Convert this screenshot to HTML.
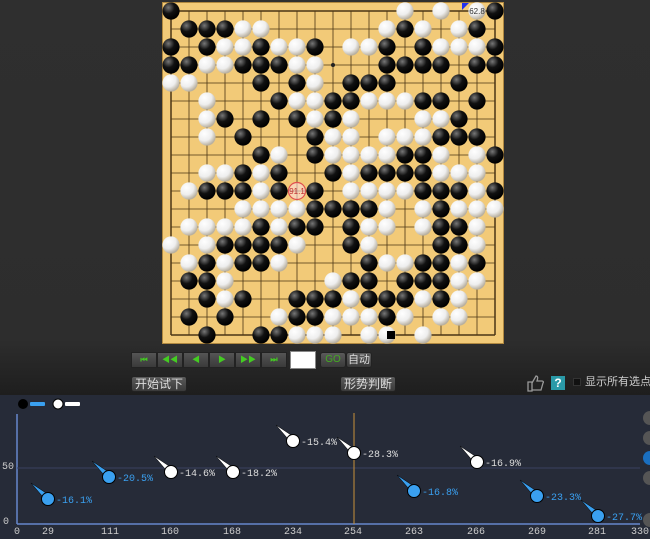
<!DOCTYPE html>
<html><head><meta charset="utf-8">
<style>
*{margin:0;padding:0;box-sizing:border-box}
body{width:650px;height:539px;overflow:hidden;background:#2c2c2c;font-family:"Liberation Sans","Noto Sans CJK SC",sans-serif;position:relative}
.top{position:absolute;left:0;top:0;width:650px;height:395px;background:linear-gradient(#2f2f2f 0,#2d2d2d 340px,#1e1e1e 395px)}
#board{position:absolute;left:162px;top:2px}
.btn{position:absolute;height:16px;background:linear-gradient(#5a5a5a,#3a3a3a);border:1px solid #222;border-radius:3px;color:#ddd;font-size:12px;line-height:14px;text-align:center;white-space:nowrap}
.nav{position:absolute;top:352px;height:16px;width:26px;background:linear-gradient(#555,#3a3a3a);border:1px solid #222;color:#4c2;font-size:8px;line-height:14px;text-align:center;font-weight:bold}
.chart{position:absolute;left:0;top:395px;width:650px;height:144px;background:#262b38}
.lbl{position:absolute;font-family:"Liberation Mono",monospace;font-size:10px;color:#ccc}
</style></head><body>
<div class="top"></div>
<svg id="board" width="342" height="342" viewBox="0 0 342 342"></svg>

<div class="nav" style="left:131px">⏮</div>
<div class="nav" style="left:157px">◀◀</div>
<div class="nav" style="left:183px">◀</div>
<div class="nav" style="left:209px">▶</div>
<div class="nav" style="left:235px">▶▶</div>
<div class="nav" style="left:261px">⏭</div>
<div style="position:absolute;left:290px;top:351px;width:26px;height:18px;background:#fff;border:1px solid #888"></div>
<div class="btn" style="left:320px;top:352px;width:26px;color:#4a2;font-size:10px">GO</div>
<div class="btn" style="left:346px;top:352px;width:26px;font-size:11px">自动</div>
<div class="btn" style="left:131px;top:376px;width:56px">开始试下</div>
<div class="btn" style="left:340px;top:376px;width:56px">形势判断</div>
<svg style="position:absolute;left:526px;top:374px" width="18" height="18"><path d="M2 8h4v9H2z M6 9l4-7c2 0 2 2 1 5h5c1 0 2 1 1 2l-2 7H6z" fill="none" stroke="#999" stroke-width="1.3"/></svg>
<div style="position:absolute;left:551px;top:376px;width:14px;height:14px;background:#2a9aa8;color:#fff;font-size:12px;font-weight:bold;line-height:14px;text-align:center">?</div>
<div style="position:absolute;left:573px;top:378px;width:8px;height:8px;background:#111;border:1px solid #333"></div>
<div style="position:absolute;left:585px;top:376px;font-size:11px;color:#ccc;line-height:13px;white-space:nowrap">显示所有选点</div>

<div class="chart"></div>
<svg style="position:absolute;left:0;top:395px" width="650" height="144" viewBox="0 395 650 144">
<circle cx="23" cy="404" r="5" fill="#000"/><rect x="30" y="402" width="15" height="4" rx="1" fill="#3aa0f0"/>
<circle cx="58" cy="404" r="5" fill="#fff" stroke="#000"/><rect x="65" y="402" width="15" height="4" rx="1" fill="#fff"/>
<line x1="17" y1="414" x2="17" y2="524" stroke="#6688cc" stroke-width="1.5"/>
<line x1="17" y1="524" x2="640" y2="524" stroke="#6688cc" stroke-width="1.5"/>
<line x1="17" y1="468" x2="640" y2="468" stroke="#3a4260"/>
<line x1="354" y1="413" x2="354" y2="524" stroke="#c8903a"/>
<g id="marks"></g>
<circle cx="650" cy="418" r="7" fill="#555"/><circle cx="650" cy="438" r="7" fill="#555"/><circle cx="650" cy="458" r="7" fill="#1a6fc0"/><circle cx="650" cy="478" r="7" fill="#555"/><circle cx="650" cy="520" r="7" fill="#555"/>
</svg>
<div class="lbl" style="left:2px;top:462px">50</div>
<div class="lbl" style="left:3px;top:517px">0</div>
<div id="xl"></div>

<script>
var rows=[
"B............W.W.WB",
".BBBWW......WBW.WB.",
"B.BWWBWWB.WWB.BWWWB",
"BBWWBBBWW...BBBB.BB",
"WW...B.BW.BBB...B..",
"..W...BWWBBWWWBB.B.",
"..WB.B.BWBW...WWB..",
"..W.B...BWW.WWWBBB.",
".....BW.BWWWWBBW.WB",
"..WWBWB..BWBBBBWWW.",
".WBBBWB.B.WWWWBBBWB",
"....WWWWBBBBW.WBWWW",
".WWWWBWBB.BWW.WBBW.",
"W.WBBBBW..BW...BBW.",
".WBWBBW....BWWBBWB.",
".BBW.....WBB.BBBWW.",
"..BWB..BBBWBBBWBW..",
".B.B..WBBWWWBW.WW..",
"..B..BBWWW.WW.W...."];
var s='<defs><radialGradient id="gb" cx="35%" cy="30%" r="70%"><stop offset="0" stop-color="#777"/><stop offset="0.5" stop-color="#111"/><stop offset="1" stop-color="#000"/></radialGradient><radialGradient id="gw" cx="35%" cy="30%" r="70%"><stop offset="0" stop-color="#fff"/><stop offset="0.6" stop-color="#eee"/><stop offset="1" stop-color="#b8b0a0"/></radialGradient></defs>';
s+='<rect width="342" height="342" fill="#f2ca78"/><rect x="0.5" y="0.5" width="341" height="341" fill="none" stroke="#b08840"/>';
for(var i=0;i<19;i++){var p=9+18*i;s+='<line x1="9" y1="'+p+'" x2="333" y2="'+p+'" stroke="#4a3515" stroke-width="'+(i==0||i==18?1.5:0.8)+'"/><line x1="'+p+'" y1="9" x2="'+p+'" y2="333" stroke="#4a3515" stroke-width="'+(i==0||i==18?1.5:0.8)+'"/>';}
[3,9,15].forEach(function(a){[3,9,15].forEach(function(b){s+='<circle cx="'+(9+18*a)+'" cy="'+(9+18*b)+'" r="2" fill="#222"/>';});});
for(var r=0;r<19;r++)for(var c=0;c<19;c++){var ch=rows[r][c];if(ch=='.')continue;s+='<circle cx="'+(9+18*c)+'" cy="'+(9+18*r)+'" r="8.6" fill="url(#g'+(ch=='B'?'b':'w')+')"/>';}
s+='<circle cx="135" cy="189" r="8.5" fill="rgba(255,220,220,0.6)" stroke="#e05050" stroke-width="1.2"/><text x="135" y="192" font-size="8" fill="#c03030" text-anchor="middle" font-family="Liberation Sans">91.1</text>';
s+='<text x="315" y="12" font-size="8" fill="#333" text-anchor="middle" font-family="Liberation Sans">62.8</text><path d="M300 1h7l-7 7z" fill="#2030f0"/>';
s+='<rect x="225" y="329" width="8" height="8" fill="#000"/>';
document.getElementById('board').innerHTML=s;
var m=[[48,499,'b','-16.1%'],[109,477,'b','-20.5%'],[171,472,'w','-14.6%'],[233,472,'w','-18.2%'],[293,441,'w','-15.4%'],[354,453,'w','-28.3%'],[414,491,'b','-16.8%'],[477,462,'w','-16.9%'],[537,496,'b','-23.3%'],[598,516,'b','-27.7%']];
var g='';m.forEach(function(k){var col=k[2]=='b'?'#3aa0f0':'#fff';var x=k[0],y=k[1];
g+='<path d="M'+(x-17)+' '+(y-16)+'L'+(x-2)+' '+(y-6)+'L'+(x-5)+' '+(y-2)+'Z" fill="'+col+'" stroke="#000" stroke-width="0.5"/><circle cx="'+x+'" cy="'+y+'" r="6.5" fill="'+col+'" stroke="#000" stroke-width="1"/><text x="'+(x+8)+'" y="'+(y+4)+'" font-size="10" font-family="Liberation Mono" fill="'+(k[2]=='b'?'#3aa0f0':'#ddd')+'">'+k[3]+'</text>';});
document.getElementById('marks').innerHTML=g;
var xs=[[17,'0'],[48,'29'],[110,'111'],[170,'160'],[232,'168'],[293,'234'],[353,'254'],[414,'263'],[476,'266'],[537,'269'],[597,'281'],[640,'330']];
var h='';xs.forEach(function(k){h+='<div class="lbl" style="left:'+(k[0]-15)+'px;width:30px;text-align:center;top:527px">'+k[1]+'</div>';});
document.getElementById('xl').innerHTML=h;
</script>
</body></html>
